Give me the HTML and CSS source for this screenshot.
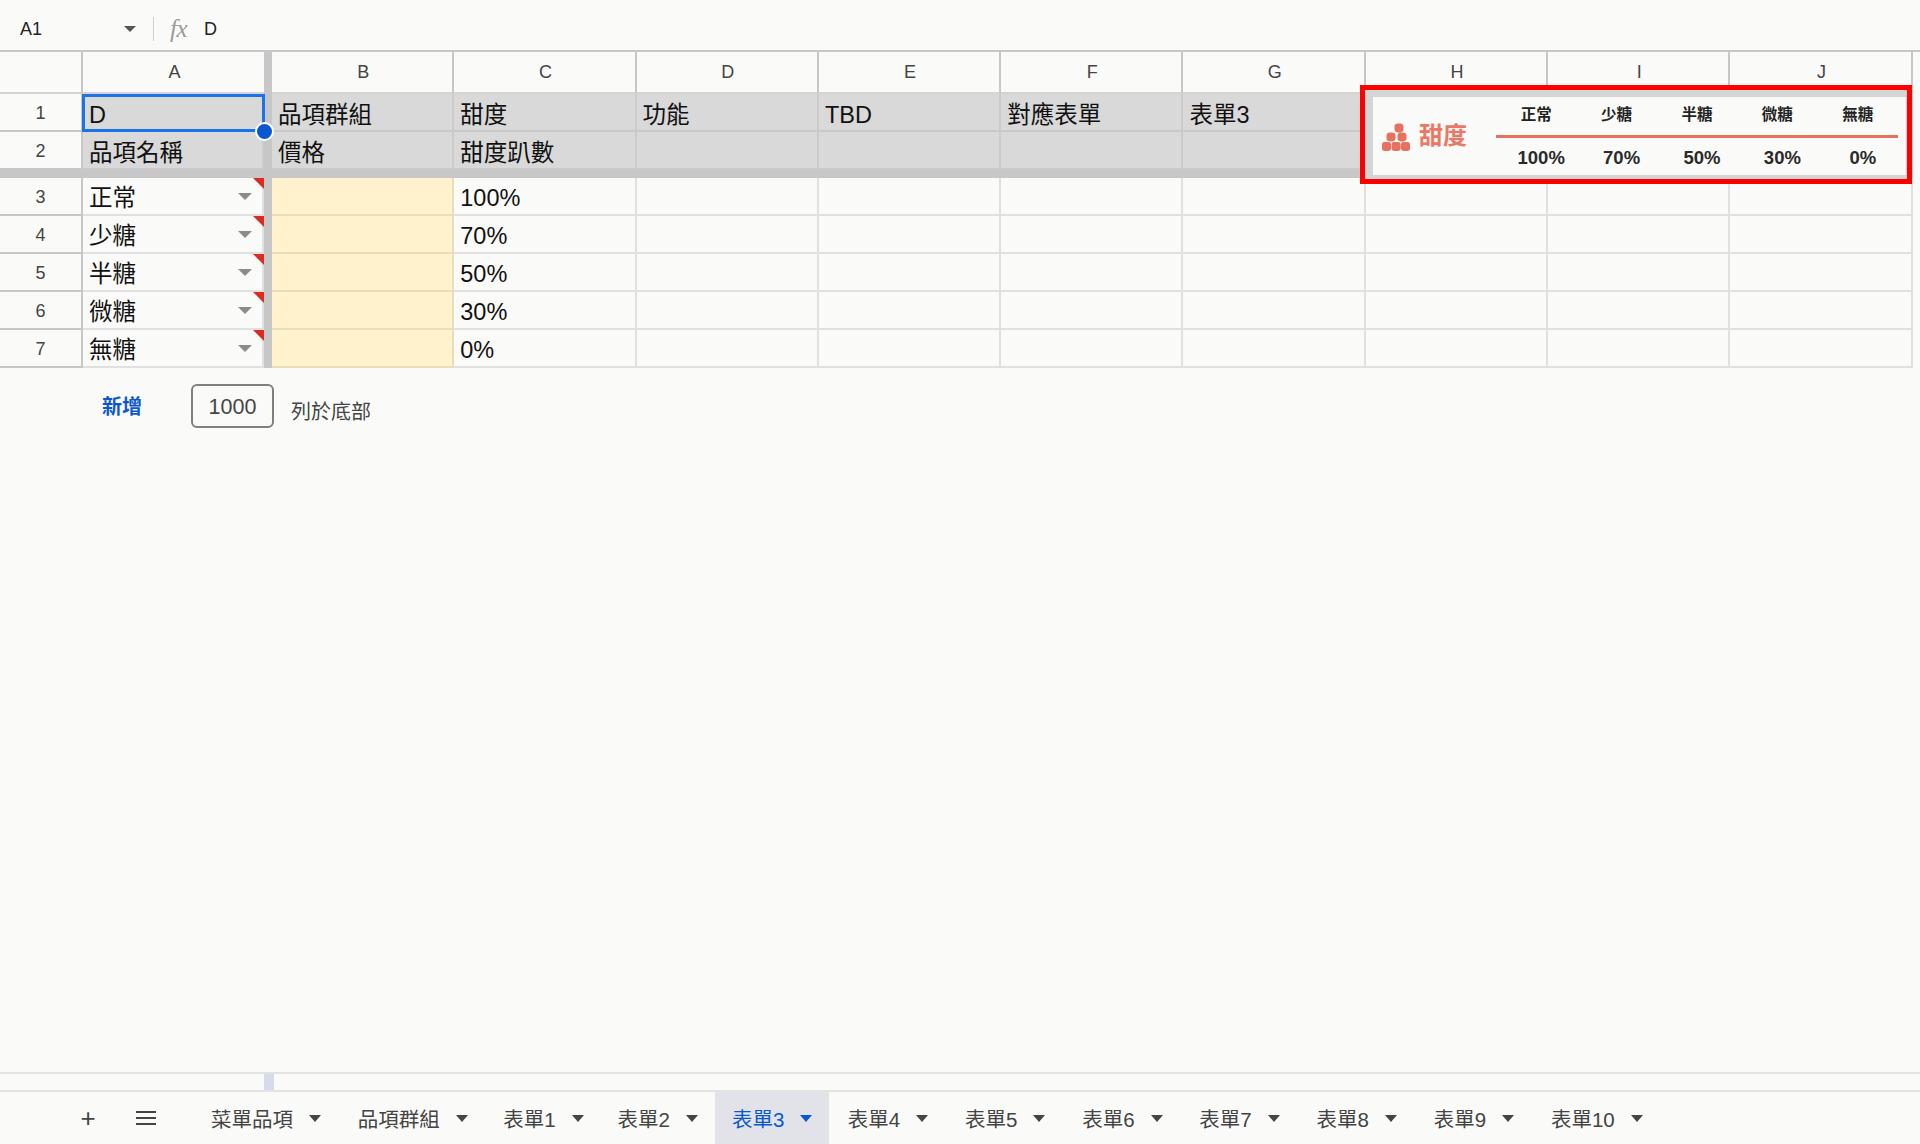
FILE: index.html
```html
<!DOCTYPE html>
<html lang="zh-Hant">
<head>
<meta charset="utf-8">
<title>表單3</title>
<link rel="stylesheet" href="styles.css">
</head>
<body>
<div class="app">
  <header class="formula-bar">
    <span class="name-box">A1</span>
    <span class="caret name-caret"></span>
    <span class="fb-sep"></span>
    <span class="fx">fx</span>
    <span class="fb-value">D</span>
  </header>

  <main class="sheet">
    <div class="grid">
      <div class="bar-col"></div>
      <div class="bar-row"></div>

      <div class="corner"></div>
      <div class="col-h">A</div>
      <div class="col-h">B</div><div class="col-h">C</div><div class="col-h">D</div><div class="col-h">E</div><div class="col-h">F</div><div class="col-h">G</div><div class="col-h">H</div><div class="col-h">I</div><div class="col-h">J</div>

      <div class="row-h">1</div>
      <div class="cell grey selected">D</div>
      <div class="cell grey">品項群組</div><div class="cell grey">甜度</div><div class="cell grey">功能</div><div class="cell grey">TBD</div><div class="cell grey">對應表單</div><div class="cell grey">表單3</div><div class="cell grey"></div><div class="cell grey"></div><div class="cell grey"></div>

      <div class="row-h">2</div>
      <div class="cell grey">品項名稱</div>
      <div class="cell grey">價格</div><div class="cell grey">甜度趴數</div><div class="cell grey"></div><div class="cell grey"></div><div class="cell grey"></div><div class="cell grey"></div><div class="cell grey"></div><div class="cell grey"></div><div class="cell grey"></div>

      <div class="row-h">3</div>
      <div class="cell drop">正常<span class="drop-arrow"></span></div>
      <div class="cell yellow"></div><div class="cell">100%</div><div class="cell"></div><div class="cell"></div><div class="cell"></div><div class="cell"></div><div class="cell"></div><div class="cell"></div><div class="cell"></div>

      <div class="row-h">4</div>
      <div class="cell drop">少糖<span class="drop-arrow"></span></div>
      <div class="cell yellow"></div><div class="cell">70%</div><div class="cell"></div><div class="cell"></div><div class="cell"></div><div class="cell"></div><div class="cell"></div><div class="cell"></div><div class="cell"></div>

      <div class="row-h">5</div>
      <div class="cell drop">半糖<span class="drop-arrow"></span></div>
      <div class="cell yellow"></div><div class="cell">50%</div><div class="cell"></div><div class="cell"></div><div class="cell"></div><div class="cell"></div><div class="cell"></div><div class="cell"></div><div class="cell"></div>

      <div class="row-h">6</div>
      <div class="cell drop">微糖<span class="drop-arrow"></span></div>
      <div class="cell yellow"></div><div class="cell">30%</div><div class="cell"></div><div class="cell"></div><div class="cell"></div><div class="cell"></div><div class="cell"></div><div class="cell"></div><div class="cell"></div>

      <div class="row-h">7</div>
      <div class="cell drop">無糖<span class="drop-arrow"></span></div>
      <div class="cell yellow"></div><div class="cell">0%</div><div class="cell"></div><div class="cell"></div><div class="cell"></div><div class="cell"></div><div class="cell"></div><div class="cell"></div><div class="cell"></div>
    </div>

    <div class="add-rows">
      <span class="add-btn">新增</span>
      <span class="add-input">1000</span>
      <span class="add-label">列於底部</span>
    </div>

    <aside class="callout">
      <div class="callout-inner">
        <div class="brand">
          <svg class="brand-icon" width="28" height="28" viewBox="0 0 28 28" aria-hidden="true">
            <rect x="12.5" y="0.5" width="9" height="9" rx="3.4"/>
            <rect x="4.5" y="9.5" width="9" height="9" rx="3.4"/>
            <rect x="15.5" y="9.5" width="9" height="9" rx="3.4"/>
            <rect x="0" y="19" width="9" height="9" rx="2.4"/>
            <rect x="9.6" y="19" width="9" height="9" rx="2.4"/>
            <rect x="19" y="19" width="9" height="9" rx="2.4"/>
          </svg>
          <span class="brand-text">甜度</span>
        </div>
        <div class="scale">
          <div class="scale-heads"><span>正常</span><span>少糖</span><span>半糖</span><span>微糖</span><span>無糖</span></div>
          <div class="scale-line"></div>
          <div class="scale-vals"><span>100%</span><span>70%</span><span>50%</span><span>30%</span><span>0%</span></div>
        </div>
      </div>
    </aside>
  </main>

  <div class="h-scroll"><span class="h-thumb"></span></div>

  <footer class="tabbar">
    <span class="tab-add">+</span>
    <span class="tab-menu"><i></i><i></i><i></i></span>
    <div class="tabs">
      <span class="tab">菜單品項<span class="caret"></span></span>
      <span class="tab">品項群組<span class="caret"></span></span>
      <span class="tab tight">表單1<span class="caret"></span></span>
      <span class="tab tight">表單2<span class="caret"></span></span>
      <span class="tab tight active">表單3<span class="caret"></span></span>
      <span class="tab">表單4<span class="caret"></span></span>
      <span class="tab">表單5<span class="caret"></span></span>
      <span class="tab">表單6<span class="caret"></span></span>
      <span class="tab">表單7<span class="caret"></span></span>
      <span class="tab">表單8<span class="caret"></span></span>
      <span class="tab">表單9<span class="caret"></span></span>
      <span class="tab">表單10<span class="caret"></span></span>
    </div>
  </footer>
</div>
</body>
</html>
```
FILE: styles.css
```css
* { box-sizing: border-box; }
html, body { margin: 0; padding: 0; }
body {
  background: #fafaf8;
  font-family: "Liberation Sans", "Noto Sans CJK TC", sans-serif;
  color: #111;
  overflow: hidden;
}
.app {
  width: 1920px;
  height: 1144px;
  display: flex;
  flex-direction: column;
}

/* formula bar */
.formula-bar {
  height: 50px;
  flex: none;
  display: flex;
  align-items: center;
  padding: 8px 0 0 20px;
  font-size: 18px;
  color: #222;
}
.name-box { width: 104px; }
.caret {
  display: inline-block;
  width: 0;
  height: 0;
  border-left: 6px solid transparent;
  border-right: 6px solid transparent;
  border-top: 6px solid #555;
}
.fb-sep {
  width: 1px;
  height: 24px;
  background: #d0d0d0;
  margin-left: 17px;
}
.fx {
  margin-left: 16px;
  width: 34px;
  font-family: "Liberation Serif", serif;
  font-style: italic;
  font-size: 25px;
  line-height: 24px;
  color: #9a9a9a;
  letter-spacing: -0.5px;
}
.fb-value { font-size: 18px; }

/* sheet */
.sheet {
  position: relative;
  flex: 1;
  min-height: 0;
}
.grid {
  display: grid;
  grid-template-columns: 83px 181px 8px repeat(9, 182.3px);
  grid-template-rows: 42px 38px 38px 8px repeat(5, 38px);
  border-top: 2px solid #c7c7c7;
}
.bar-col {
  grid-column: 3;
  grid-row: 1 / span 9;
  background: #c7c7c7;
}
.bar-row {
  grid-column: 1 / -1;
  grid-row: 4;
  background: #c7c7c7;
}
.corner, .col-h {
  border-right: 2px solid #c7c7c7;
  border-bottom: 2px solid #d4d4d4;
  padding-left: 2px;
  display: flex;
  align-items: center;
  justify-content: center;
  font-size: 18px;
  color: #444;
}
.col-h:nth-of-type(4) { border-right: none; }
.row-h {
  border-right: 2px solid #c7c7c7;
  border-bottom: 2px solid #c7c7c7;
  padding-top: 2px;
  display: flex;
  align-items: center;
  justify-content: center;
  font-size: 18px;
  color: #444;
}
.cell {
  position: relative;
  display: flex;
  align-items: flex-end;
  padding: 0 0 0 6px;
  font-size: 23.5px;
  line-height: 31px;
  color: #111;
  border-right: 2px solid #e0e0e0;
  border-bottom: 2px solid #e0e0e0;
  white-space: nowrap;
}
.grey {
  background: #d9d9d9;
  line-height: 30px;
  border-right-color: #cbcbcb;
  border-bottom-color: #c9c9c9;
}
.yellow {
  background: #fff2cc;
  border-right-color: #e9deba;
  border-bottom-color: #e9deba;
}
.selected { z-index: 2; }
.selected::before {
  content: "";
  position: absolute;
  left: -1px;
  top: 0;
  right: -3px;
  bottom: -2px;
  border: 3px solid #1a73e8;
}
.selected::after {
  content: "";
  position: absolute;
  right: -11.5px;
  bottom: -10.5px;
  width: 15px;
  height: 15px;
  border-radius: 50%;
  background: #0b57d0;
  border: 2px solid #fff;
}
.drop::before {
  content: "";
  position: absolute;
  top: 0;
  right: -2px;
  width: 0;
  height: 0;
  border-top: 11px solid #dc2b23;
  border-left: 11px solid transparent;
}
.drop-arrow {
  position: absolute;
  right: 10px;
  top: 15px;
  width: 0;
  height: 0;
  border-left: 7px solid transparent;
  border-right: 7px solid transparent;
  border-top: 7px solid #8b8b8b;
}

/* add rows */
.add-rows {
  display: flex;
  align-items: center;
  padding-top: 16px;
  height: 60px;
}
.add-btn {
  margin-left: 102px;
  width: 89px;
  font-size: 20px;
  font-weight: 700;
  color: #0b57d0;
  line-height: 26px;
  margin-top: 2px;
}
.add-input {
  width: 83px;
  height: 44px;
  border: 2px solid #7f7f7f;
  border-radius: 6px;
  padding-top: 2px;
  display: flex;
  align-items: center;
  justify-content: center;
  font-size: 21.5px;
  color: #444;
}
.add-label {
  margin-left: 17px;
  margin-top: 8px;
  font-size: 20px;
  color: #444;
}

/* pasted callout */
.callout {
  position: absolute;
  left: 1360px;
  top: 35px;
  width: 552px;
  height: 99px;
  border: 5px solid #ff0000;
  background: #d5d5d5;
  padding: 7px 1px 4px 8px;
}
.callout-inner {
  height: 100%;
  background: #fafaf8;
  display: flex;
}
.brand {
  width: 123px;
  padding: 26px 0 0 9px;
  display: flex;
  align-items: flex-start;
  color: #e8705f;
}
.brand-icon { fill: #e8705f; flex: none; }
.brand-text {
  margin-left: 9px;
  margin-top: -4px;
  font-size: 24px;
  line-height: 34px;
  font-weight: 700;
  color: #ea7867;
}
.scale { width: 402px; }
.scale-heads, .scale-vals {
  display: grid;
  grid-template-columns: repeat(5, 80.4px);
  text-align: center;
}
.scale-heads {
  height: 38px;
  font-size: 15.5px;
  font-weight: 700;
  line-height: 36px;
  color: #222;
}
.scale-line { height: 3px; background: #e8705f; }
.scale-vals {
  padding-left: 5px;
  height: 36px;
  font-size: 18.5px;
  font-weight: 700;
  line-height: 39px;
  color: #2a2a2a;
}

/* horizontal scroll */
.h-scroll {
  height: 20px;
  flex: none;
  border-top: 2px solid #e3e3e3;
  border-bottom: 2px solid #e3e3e3;
  padding-left: 264px;
}
.h-thumb {
  display: block;
  width: 10px;
  height: 16px;
  background: #d5dbe8;
}

/* tabs */
.tabbar {
  height: 52px;
  flex: none;
  display: flex;
  align-items: center;
  color: #444;
}
.tab-add {
  margin-left: 79px;
  width: 18px;
  text-align: center;
  font-size: 26px;
  line-height: 26px;
  color: #444;
}
.tab-menu {
  margin-left: 39px;
  width: 20px;
  display: flex;
  flex-direction: column;
  gap: 4px;
}
.tab-menu i {
  display: block;
  height: 2px;
  background: #444;
}
.tabs {
  margin-left: 36.6px;
  display: flex;
  align-self: stretch;
}
.tab {
  display: flex;
  align-items: center;
  padding: 0 18.4px;
  font-size: 20.5px;
  color: #444;
  white-space: nowrap;
}
.tab.tight { padding: 0 17px; }
.tab .caret {
  margin-left: 16px;
  border-left-width: 6px;
  border-right-width: 6px;
  border-top-width: 7px;
  border-top-color: #444;
}
.tab.active {
  background: #e1e3e9;
  color: #0b57d0;
}
.tab.active .caret { border-top-color: #0b57d0; }
```
